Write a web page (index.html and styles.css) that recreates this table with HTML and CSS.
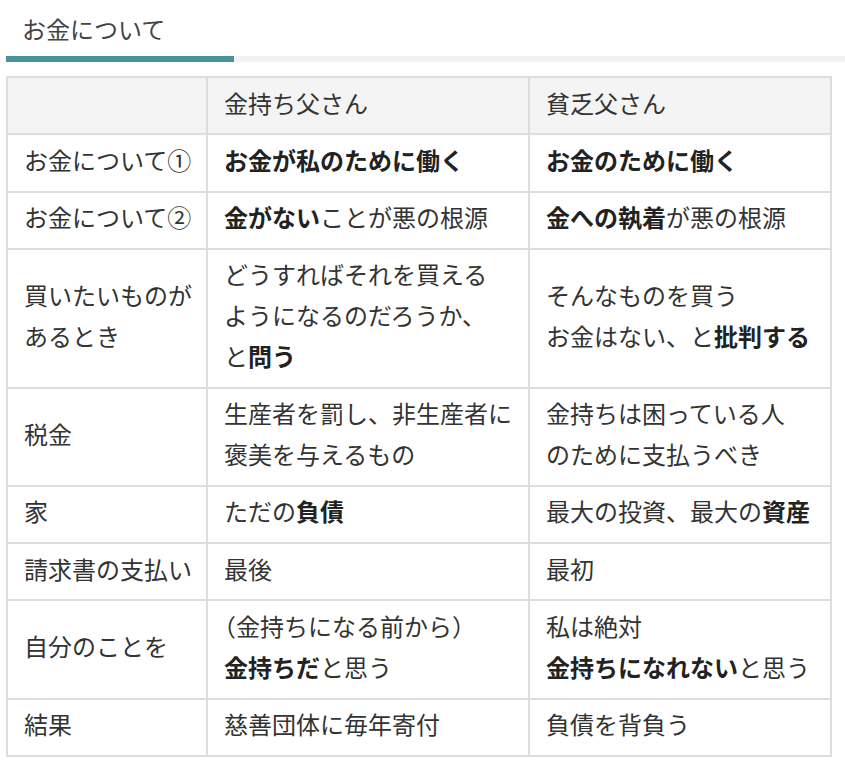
FILE: index.html
```html
<!DOCTYPE html>
<html lang="ja">
<head>
<meta charset="utf-8">
<title>お金について</title>
<link rel="stylesheet" href="styles.css">
</head>
<body>
<div class="page">
  <div class="tabs">
    <div class="tab">お金について</div>
  </div>
  <table class="compare">
    <colgroup>
      <col class="c1"><col class="c2"><col class="c3">
    </colgroup>
    <thead>
      <tr><th></th><th>金持ち父さん</th><th>貧乏父さん</th></tr>
    </thead>
    <tbody>
      <tr><td>お金について①</td><td><strong>お金が私のために働く</strong></td><td><strong>お金のために働く</strong></td></tr>
      <tr><td>お金について②</td><td><strong>金がない</strong>ことが悪の根源</td><td><strong>金への執着</strong>が悪の根源</td></tr>
      <tr><td>買いたいものが<br>あるとき</td><td>どうすればそれを買える<br>ようになるのだろうか、<br>と<strong>問う</strong></td><td>そんなものを買う<br>お金はない、と<strong>批判する</strong></td></tr>
      <tr><td>税金</td><td>生産者を罰し、非生産者に<br>褒美を与えるもの</td><td>金持ちは困っている人<br>のために支払うべき</td></tr>
      <tr><td>家</td><td>ただの<strong>負債</strong></td><td>最大の投資、最大の<strong>資産</strong></td></tr>
      <tr><td>請求書の支払い</td><td>最後</td><td>最初</td></tr>
      <tr><td>自分のことを</td><td><span class="paren">（</span>金持ちになる前から<span class="paren">）</span><br><strong>金持ちだ</strong>と思う</td><td>私は絶対<br><strong>金持ちになれない</strong>と思う</td></tr>
      <tr><td>結果</td><td>慈善団体に毎年寄付</td><td>負債を背負う</td></tr>
    </tbody>
  </table>
</div>
</body>
</html>
```

FILE: styles.css
```css
html, body {
  margin: 0;
  padding: 0;
  background: #fff;
}
body {
  font-family: "Noto Sans CJK JP", "Noto Sans", sans-serif;
  color: #333;
  font-size: 24px;
}
.page {
  padding-left: 6px;
}
.tabs {
  border-bottom: 6px solid #f2f2f2;
  display: flex;
}
.tab {
  width: 228px;
  box-sizing: border-box;
  padding: 9px 0 7px 16px;
  line-height: 40px;
  color: #444;
  border-bottom: 6px solid #4b939b;
  margin-bottom: -6px;
}
.compare {
  margin-top: 14px;
  border-collapse: collapse;
  table-layout: fixed;
  width: 824px;
  border: 2px solid #dddddd;
}
.c1 { width: 200px; }
.c2 { width: 322px; }
.c3 { width: 302px; }
.compare th,
.compare td {
  border: 2px solid #dddddd;
  padding: 4.5px 16px 10px;
  line-height: 40.8px;
  text-align: left;
  vertical-align: middle;
  white-space: nowrap;
}
.compare th {
  background: #f4f4f4;
  font-weight: 400;
}
.compare td {
  background: #fff;
}
.compare strong {
  font-weight: 700;
  color: #222;
}
.paren {
  font-feature-settings: "halt";
}
```
